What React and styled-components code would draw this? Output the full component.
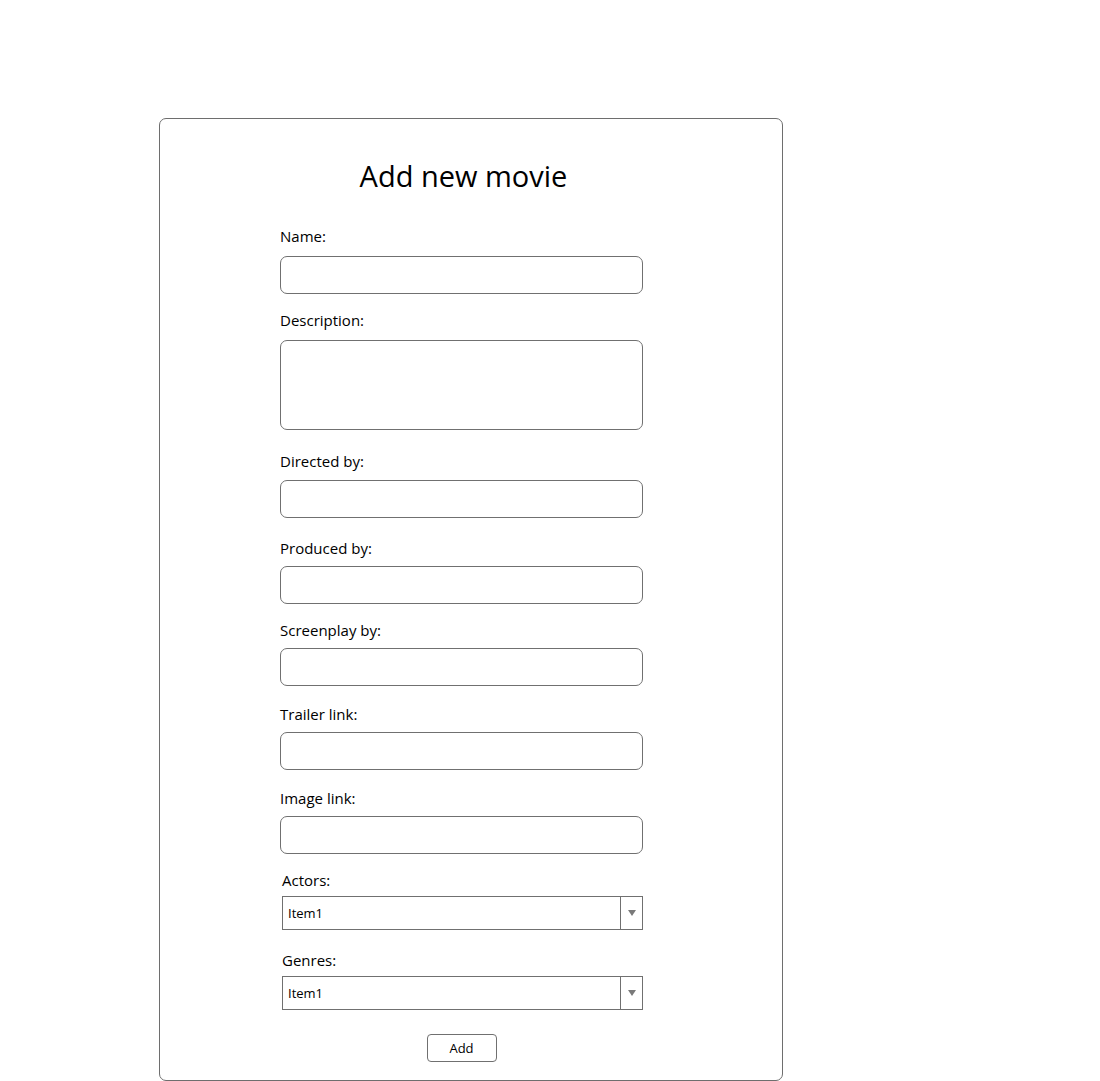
import React from "react";
import styled, { createGlobalStyle } from "styled-components";

const Global = createGlobalStyle`
  html, body { margin: 0; padding: 0; background: #fff; }
  body { font-family: "Open Sans", "Noto Sans", "Liberation Sans", sans-serif; color: #000; }
  * { box-sizing: border-box; }
`;

const Page = styled.div`
  padding: 118px 0 0 159px;
`;

const Card = styled.form`
  width: 624px;
  border: 1px solid #6e6e6e;
  border-radius: 7px;
  padding: 38px 0 18px 120px;
  display: flex;
  flex-direction: column;
  background: #fff;
`;

const Column = styled.div`
  width: 363px;
  display: flex;
  flex-direction: column;
`;

const Title = styled.h1`
  margin: 0;
  font-weight: 400;
  font-size: 29px;
  line-height: 38px;
  text-align: center;
  padding-left: 4px;
`;

const Field = styled.div`
  display: flex;
  flex-direction: column;
  margin-top: ${(p) => p.$top}px;
  padding-left: ${(p) => p.$indent || 0}px;
`;

const Label = styled.label`
  font-size: 15px;
  line-height: 20px;
  height: 20px;
  margin-bottom: ${(p) => p.$gap}px;
`;

const TextBox = styled.input`
  width: 363px;
  height: 38px;
  border: 1px solid #707070;
  border-radius: 7px;
  font: inherit;
  padding: 0 8px;
  outline: none;
`;

const TextArea = styled.textarea`
  width: 363px;
  height: 90px;
  border: 1px solid #707070;
  border-radius: 7px;
  font: inherit;
  padding: 6px 8px;
  resize: none;
  outline: none;
  display: block;
`;

const Combo = styled.div`
  width: 361px;
  height: 34px;
  border: 1px solid #707070;
  display: flex;
  align-items: stretch;
`;

const ComboText = styled.div`
  flex: 1;
  font-size: 13px;
  display: flex;
  align-items: center;
  padding-left: 5px;
`;

const ComboArrow = styled.div`
  width: 22px;
  border-left: 1px solid #707070;
  display: flex;
  align-items: center;
  justify-content: center;
`;

const ButtonRow = styled.div`
  display: flex;
  justify-content: center;
  margin-top: 24px;
`;

const Button = styled.button`
  width: 70px;
  height: 28px;
  border: 1px solid #707070;
  border-radius: 4px;
  background: #fff;
  font-family: inherit;
  font-size: 13px;
  color: #000;
  padding: 0;
`;

const Arrow = () => (
  <svg width="8" height="6" viewBox="0 0 8 6">
    <polygon points="0,0 8,0 4,6" fill="#7a7a7a" />
  </svg>
);

const inputs = [
  { label: "Name:", top: 31, gap: 10 },
  { label: "Description:", top: 16, gap: 10, area: true },
  { label: "Directed by:", top: 21, gap: 9 },
  { label: "Produced by:", top: 20, gap: 8 },
  { label: "Screenplay by:", top: 16, gap: 8 },
  { label: "Trailer link:", top: 18, gap: 8 },
  { label: "Image link:", top: 18, gap: 8 },
];

const combos = [
  { label: "Actors:", top: 16, gap: 6 },
  { label: "Genres:", top: 20, gap: 6 },
];

export default function App() {
  return (
    <>
      <Global />
      <Page>
        <Card onSubmit={(e) => e.preventDefault()}>
          <Column>
            <Title>Add new movie</Title>
            {inputs.map((f) => (
              <Field key={f.label} $top={f.top}>
                <Label $gap={f.gap}>{f.label}</Label>
                {f.area ? <TextArea /> : <TextBox type="text" />}
              </Field>
            ))}
            {combos.map((c) => (
              <Field key={c.label} $top={c.top} $indent={2}>
                <Label $gap={c.gap}>{c.label}</Label>
                <Combo>
                  <ComboText>Item1</ComboText>
                  <ComboArrow>
                    <Arrow />
                  </ComboArrow>
                </Combo>
              </Field>
            ))}
            <ButtonRow>
              <Button type="submit">Add</Button>
            </ButtonRow>
          </Column>
        </Card>
      </Page>
    </>
  );
}
